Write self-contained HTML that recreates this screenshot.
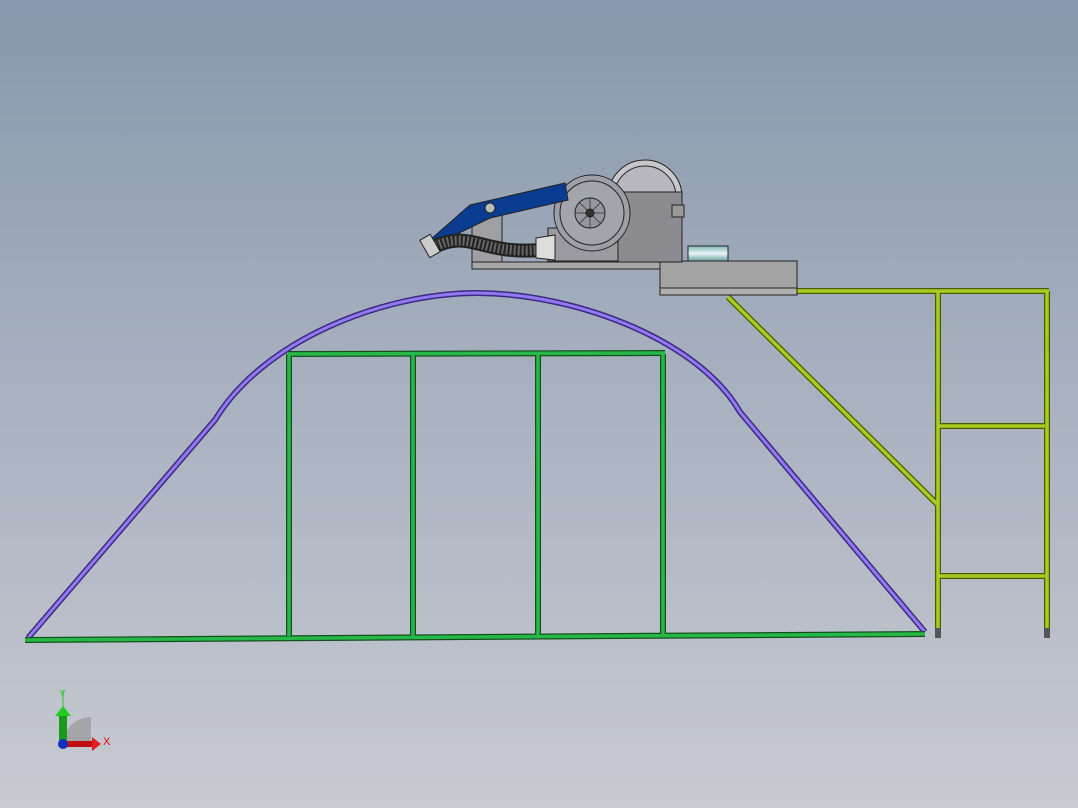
<!DOCTYPE html>
<html><head><style>html,body{margin:0;padding:0;width:1078px;height:808px;overflow:hidden}
body{background:linear-gradient(#8898ad 0%,#a9b2c0 50%,#c8cad1 100%)}</style></head><body>
<svg width="1078" height="808" viewBox="0 0 1078 808" xmlns="http://www.w3.org/2000/svg" style="position:absolute;left:0;top:0">
<defs>
<linearGradient id="cy" x1="0" y1="0" x2="0" y2="1"><stop offset="0" stop-color="#7fb7b8"/><stop offset=".5" stop-color="#e8f4f4"/><stop offset="1" stop-color="#6aa0a2"/></linearGradient>
</defs>
<!-- purple arch -->
<path d="M28,638 L215,420 C262,342 380,293 478,293 C580,294 700,342 740,412 L925,632" fill="none" stroke="#3a2a80" stroke-width="6"/>
<path d="M28,638 L215,420 C262,342 380,293 478,293 C580,294 700,342 740,412 L925,632" fill="none" stroke="#9478f0" stroke-width="3"/>
<!-- green frame -->
<g stroke="#14501c" stroke-width="6" fill="none">
<path d="M25,640 L925,634"/><path d="M288,354 L665,353"/>
<path d="M289,354 V636 M413,354 V636 M538,354 V636 M663,354 V635"/>
</g>
<g stroke="#26b848" stroke-width="3.5" fill="none">
<path d="M25,640 L925,634"/><path d="M288,354 L665,353"/>
<path d="M289,354 V636 M413,354 V636 M538,354 V636 M663,354 V635"/>
</g>
<!-- yellow-green frame -->
<g stroke="#4a5a00" stroke-width="6" fill="none">
<path d="M662,291 H1049"/><path d="M728,297 L938,505"/>
<path d="M938,291 V630 M1047,291 V630 M938,426 H1045 M938,576 H1045"/>
</g>
<g stroke="#aacc22" stroke-width="3.5" fill="none">
<path d="M662,291 H1049"/><path d="M728,297 L938,505"/>
<path d="M938,291 V630 M1047,291 V630 M938,426 H1045 M938,576 H1045"/>
</g>
<rect x="935" y="628" width="6" height="10" fill="#555"/><rect x="1044" y="628" width="6" height="10" fill="#555"/>
<!-- machine -->
<g stroke="#222" stroke-width="1">
<rect x="472" y="262" width="190" height="7" fill="#a8a8a8"/>
<rect x="660" y="261" width="137" height="28" fill="#a4a4a4"/>
<rect x="660" y="288" width="137" height="7" fill="#b0b0b0"/>
<circle cx="645" cy="197" r="37" fill="#c8c8cc"/>
<circle cx="645" cy="197" r="31" fill="#b8b8be"/>
<rect x="472" y="215" width="30" height="47" fill="#a0a0a4"/>
<rect x="610" y="192" width="72" height="70" fill="#8c8c90"/>
<rect x="672" y="205" width="12" height="12" fill="#999"/>
<rect x="548" y="228" width="70" height="33" fill="#9a9aa0"/>
<circle cx="592" cy="213" r="38" fill="#9e9ea6"/>
<circle cx="592" cy="213" r="32" fill="#a4a4ac"/>
<circle cx="590" cy="213" r="15" fill="#96969e"/>
<path d="M575,213 H605 M590,198 V228 M579,202 L601,224 M601,202 L579,224" stroke="#333" stroke-width="0.8"/>
<circle cx="590" cy="213" r="4" fill="#333"/>
<path d="M430,240 L470,205 L565,183 L568,200 L490,218 L455,235 Z" fill="#0a3d8f"/>
<circle cx="490" cy="208" r="5" fill="#bbb"/>
<path d="M432,248 C470,228 480,255 540,250" fill="none" stroke="#222" stroke-width="14"/>
<path d="M432,248 C470,228 480,255 540,250" fill="none" stroke="#666" stroke-width="10" stroke-dasharray="2 2"/>
<path d="M536,238 L555,235 L555,260 L536,258 Z" fill="#ddd"/>
<rect x="424" y="236" width="12" height="20" fill="#ccc" transform="rotate(-30 430 246)"/>
<rect x="688" y="246" width="40" height="15" fill="url(#cy)"/>
</g>
<!-- axis triad -->
<path d="M63,690 L63,708" stroke="#2c2" stroke-width="1"/>
<text x="59" y="697" font-family="Liberation Sans,sans-serif" font-size="10" fill="#2c2">Y</text>
<path d="M63,745 A28,28 0 0 1 91,717 L91,745 Z" fill="#909090" opacity=".6"/>
<rect x="59" y="714" width="8" height="32" fill="#1a9a1a"/>
<path d="M55,716 L63,706 L71,716 Z" fill="#2c2"/>
<rect x="63" y="741" width="30" height="6" fill="#c01010"/>
<path d="M92,737 L101,744 L92,751 Z" fill="#e02020"/>
<circle cx="63" cy="744" r="5" fill="#1030c0"/>
<text x="103" y="745" font-family="Liberation Sans,sans-serif" font-size="11" fill="#e00">X</text>
</svg>
</body></html>
